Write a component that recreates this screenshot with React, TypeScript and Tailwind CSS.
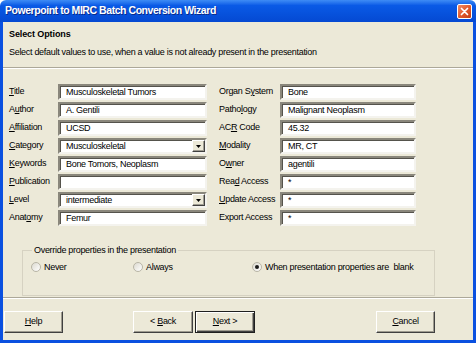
import React from 'react';

const leftFields = [
  { label: 'Title', u: 0, value: 'Musculoskeletal Tumors' },
  { label: 'Author', u: 1, value: 'A. Gentili' },
  { label: 'Affiliation', u: 0, value: 'UCSD' },
  { label: 'Category', u: 0, value: 'Musculoskeletal', combo: true },
  { label: 'Keywords', u: 0, value: 'Bone Tomors, Neoplasm' },
  { label: 'Publication', u: 0, value: '' },
  { label: 'Level', u: 0, value: 'intermediate', combo: true },
  { label: 'Anatomy', u: 4, value: 'Femur' },
];

const rightFields = [
  { label: 'Organ System', u: 7, value: 'Bone' },
  { label: 'Pathology', u: 5, value: 'Malignant Neoplasm' },
  { label: 'ACR Code', u: 2, value: '45.32' },
  { label: 'Modality', u: 0, value: 'MR, CT' },
  { label: 'Owner', u: 1, value: 'agentili' },
  { label: 'Read Access', u: 3, value: '*' },
  { label: 'Update Access', u: 0, value: '*' },
  { label: 'Export Access', u: -1, value: '*' },
];

// text with an access-key letter underlined
function Key({ text, u }: { text: string; u: number }) {
  if (u < 0) return <>{text}</>;
  return (
    <span className="whitespace-pre">
      {text.slice(0, u)}
      <span className="underline underline-offset-1">{text[u]}</span>
      {text.slice(u + 1)}
    </span>
  );
}

function Field({ value, combo }: { value: string; combo?: boolean }) {
  return (
    <div className="flex h-[16px] flex-1 items-stretch bg-white border-2 border-t-[#8a877c] border-l-[#8a877c] border-b-[#f4f3ee] border-r-[#f4f3ee] shadow-[inset_1px_1px_0_#55534c]">
      <div className="flex flex-1 items-center pl-[6px] leading-none">{value}</div>
      {combo && (
        <div className="flex w-[13px] items-center justify-center bg-[#ece9d8] border border-t-[#fff] border-l-[#fff] border-b-[#404040] border-r-[#404040] shadow-[inset_-1px_-1px_0_#a09d92]">
          <svg width="5" height="3" viewBox="0 0 5 3">
            <path d="M0 0h5L2.5 3z" fill="#000" />
          </svg>
        </div>
      )}
    </div>
  );
}

function Column({ fields, labelW }: { fields: typeof leftFields; labelW: string }) {
  return (
    <div className="flex flex-col gap-[2px]">
      {fields.map((f) => (
        <div key={f.label} className="flex h-[16px] items-start">
          <div className={`${labelW} pt-[1px] leading-[12px] whitespace-nowrap`}>
            <Key text={f.label} u={f.u} />
          </div>
          <Field value={f.value} combo={'combo' in f ? (f as any).combo : false} />
        </div>
      ))}
    </div>
  );
}

function Radio({ label, checked }: { label: string; checked?: boolean }) {
  return (
    <div className="flex items-center gap-[3px]">
      <div className="flex h-[10px] w-[10px] items-center justify-center rounded-full border border-[#b8b5a6] bg-linear-to-br from-[#dcdad0] to-white">
        {checked && <div className="h-[4px] w-[4px] rounded-full bg-[#1a1a1a]" />}
      </div>
      <span className="whitespace-pre leading-none">{label}</span>
    </div>
  );
}

function Button({ children, w, def }: { children: React.ReactNode; w: string; def?: boolean }) {
  const frame = def
    ? 'border border-[#1f1f1f] shadow-[inset_1px_1px_0_#fff,inset_-1px_-1px_0_#404040,inset_-2px_-2px_0_#9e9b8f]'
    : 'border border-t-white border-l-white border-b-[#404040] border-r-[#404040] shadow-[inset_-1px_-1px_0_#9e9b8f]';
  return (
    <div className={`flex h-[22px] ${w} items-center justify-center bg-[#ece9d8] ${frame}`}>
      {children}
    </div>
  );
}

export default function App() {
  return (
    <div className="flex h-[343px] w-[476px] flex-col overflow-hidden font-['Liberation_Sans',Arial,sans-serif] text-[9px] tracking-[-0.3px] text-black">
      {/* Title bar */}
      <div className="flex h-[22px] shrink-0 items-center justify-between rounded-t-[6px] bg-linear-to-b from-[#3e8cf5] via-[#0a5ae6] via-25% to-[#0549d2] pl-[5px] pr-[4px]">
        <span className="text-[10.5px] font-bold tracking-[-0.45px] text-white [text-shadow:1px_1px_0_#0a2a8a]">
          Powerpoint to MIRC Batch Conversion Wizard
        </span>
        <div className="flex h-[15px] w-[15px] items-center justify-center rounded-[2px] border border-white bg-linear-to-br from-[#f08a63] via-[#e25a2c] to-[#c33d14]">
          <svg width="9" height="9" viewBox="0 0 9 9">
            <path d="M1.5 1.5l6 6M7.5 1.5l-6 6" stroke="#fff" strokeWidth="1.7" strokeLinecap="round" />
          </svg>
        </div>
      </div>

      {/* Window body */}
      <div className="flex flex-1 flex-col border-x-[3px] border-b-[3px] border-[#0a50e0] bg-[#ece9d8]">
        {/* Header */}
        <div className="flex h-[47px] shrink-0 flex-col border-b border-b-white shadow-[inset_0_-1px_0_#aca899] pl-[6px] pt-[7px]">
          <div className="font-bold leading-[11px] tracking-[-0.1px]">Select Options</div>
          <div className="mt-[7px] leading-[11px]">
            Select default values to use, when a value is not already present in the presentation
          </div>
        </div>

        {/* Properties */}
        <div className="flex pl-[6px] pt-[15px]">
          <div className="w-[198px]">
            <Column fields={leftFields} labelW="w-[49px]" />
          </div>
          <div className="ml-[12px] w-[197px]">
            <Column fields={rightFields} labelW="w-[61px]" />
          </div>
        </div>

        {/* Override group */}
        <fieldset className="ml-[19px] mt-[19px] h-[51px] w-[413px] border border-[#d6d2c2] px-[8px] pb-[21px]">
          <legend className="ml-[1px] px-[2px] leading-[10px]">Override properties in the presentation</legend>
          <div className="flex items-center pt-[7px]">
            <div className="w-[102px]">
              <Radio label="Never" />
            </div>
            <div className="w-[119px]">
              <Radio label="Always" />
            </div>
            <Radio label="When presentation properties are  blank" checked />
          </div>
        </fieldset>

        {/* Separator */}
        <div className="mt-[1px] h-[2px] border-t border-t-[#aca899] border-b border-b-white" />

        {/* Buttons */}
        <div className="flex items-start pt-[12px]">
          <div className="ml-[1px]">
            <Button w="w-[59px]">
              <Key text="Help" u={0} />
            </Button>
          </div>
          <div className="ml-[70px]">
            <Button w="w-[60px]">
              <Key text="< Back" u={2} />
            </Button>
          </div>
          <div className="ml-[2px]">
            <Button w="w-[60px]" def>
              <Key text="Next >" u={0} />
            </Button>
          </div>
          <div className="ml-[121px]">
            <Button w="w-[59px]">
              <Key text="Cancel" u={0} />
            </Button>
          </div>
        </div>
      </div>
    </div>
  );
}
